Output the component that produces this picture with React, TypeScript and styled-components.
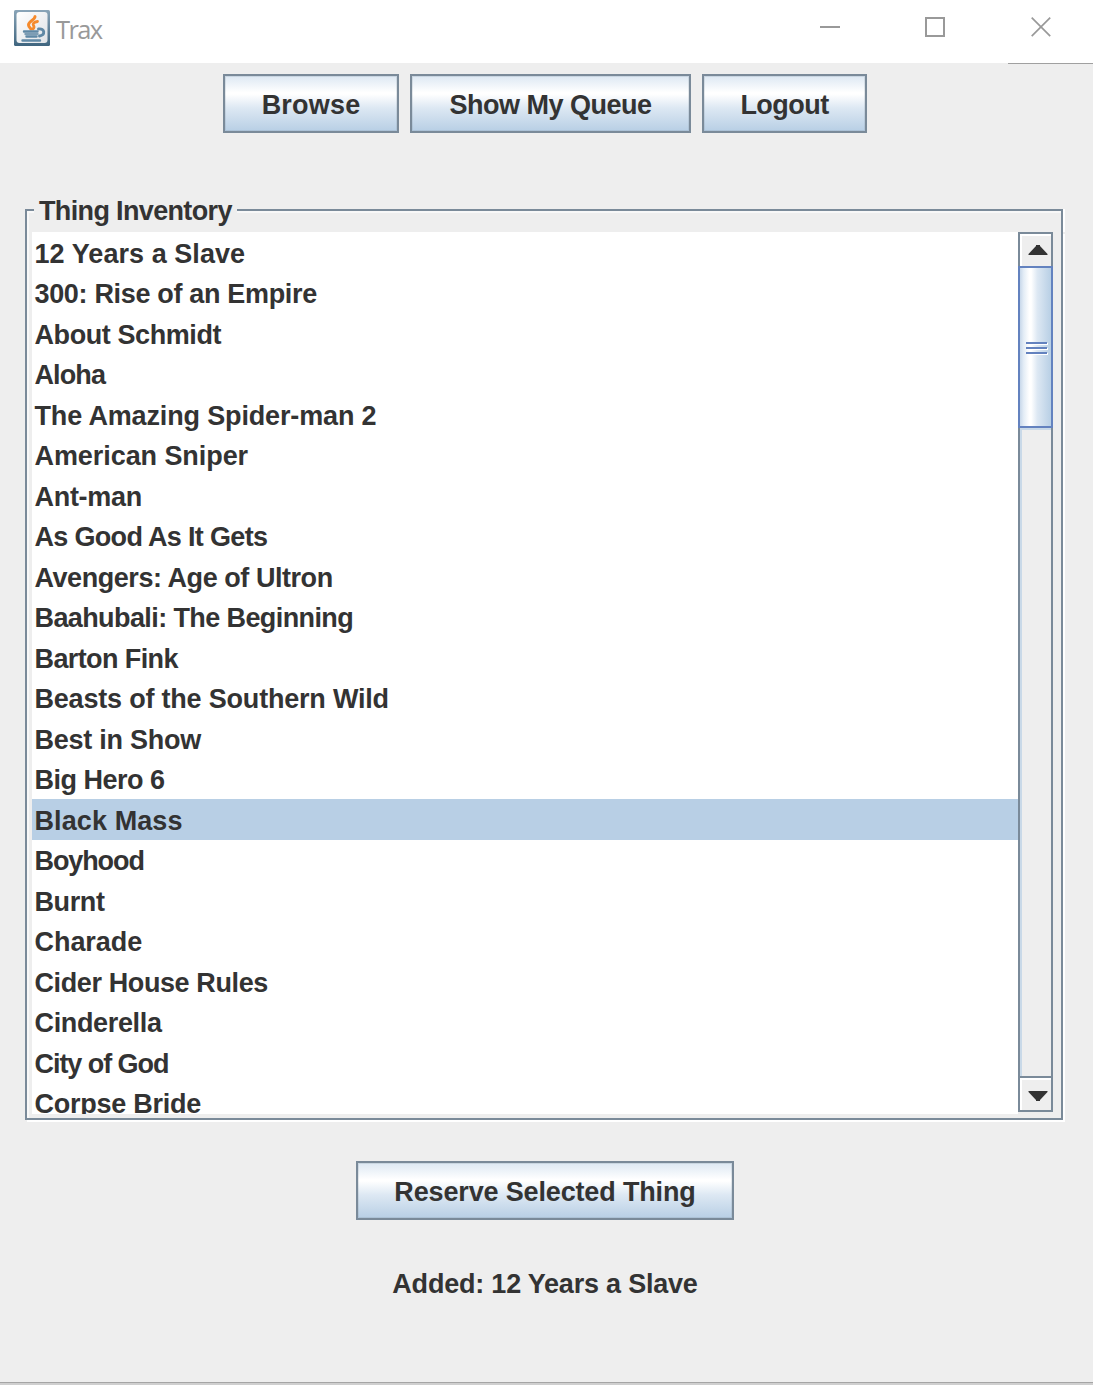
import React, { useState } from "react";
import styled, { createGlobalStyle } from "styled-components";

const steel = "#7a8a99";
const panel = "#eeeeee";
const ink = "#333333";

const GlobalStyle = createGlobalStyle`
  * { box-sizing: border-box; }
  body { margin: 0; background: ${panel}; }
`;

const Window = styled.div`
  display: flex;
  flex-direction: column;
  width: 1093px;
  height: 1385px;
  overflow: hidden;
  background: ${panel};
  border-bottom: 2px solid #cfcfcf;
  color: ${ink};
  font: bold 27px "Liberation Sans", Arial, sans-serif;
  white-space: nowrap;
`;

const TitleBar = styled.header`
  display: flex;
  height: 63px;
  flex: none;
  padding-left: 14px;
  background: #ffffff;
`;

const AppIcon = styled.svg`
  width: 36px;
  height: 36px;
  margin-top: 10px;
`;

const Title = styled.span`
  flex: 1;
  margin: 11px 0 0 6px;
  color: #999999;
  font: 400 25.5px/36px "Open Sans", "Noto Sans", sans-serif;
  letter-spacing: -1.6px;
`;

const WindowControls = styled.div`
  display: flex;
  gap: 85px;
  padding-right: 41px;
`;

const ControlIcon = styled.svg`
  width: 21px;
  height: 21px;
  margin-top: 17px;
  fill: none;
  stroke: #999999;
  stroke-width: 2;
`;

const TitleEdge = styled.div`
  width: 85px;
  height: 1px;
  flex: none;
  align-self: flex-end;
  background: #a0a0a0;
`;

const Content = styled.main`
  display: flex;
  flex: 1;
  flex-direction: column;
  border-bottom: 1px solid #a5a5a5;
`;

const Toolbar = styled.nav`
  display: flex;
  gap: 11px;
  height: 59px;
  margin: 10px 0 0 223px;
`;

const MetalButton = styled.button<{ $width: number; $tracking: number }>`
  width: ${(p) => p.$width}px;
  height: 59px;
  flex: none;
  padding: 4px 0 0;
  border: 2px solid ${steel};
  box-shadow: inset 0 0 0 1px rgba(122, 138, 153, 0.2);
  background: linear-gradient(#dde8f3 0%, #ffffff 30%, #ffffff 33%, #dde8f3 58%, #b8cfe5 100%);
  color: inherit;
  font: inherit;
  letter-spacing: ${(p) => p.$tracking}px;
`;

const Group = styled.section`
  display: flex;
  flex-direction: column;
  width: 1038px;
  margin: 62px 0 0 25px;
`;

const GroupHeader = styled.div`
  display: flex;
  height: 37px;
`;

const CornerLine = styled.div`
  width: 9px;
  margin-top: 14px;
  border-top: 2px solid ${steel};
  border-left: 2px solid ${steel};
  box-shadow: inset 2px 2px 0 #f8f8f8;
`;

const Legend = styled.h2`
  width: 203px;
  margin: 0;
  padding: 1px 0 0 5px;
  font: inherit;
  line-height: 30px;
  letter-spacing: -0.65px;
`;

const TopLine = styled.div`
  flex: 1;
  margin-top: 14px;
  border-top: 2px solid ${steel};
  border-right: 2px solid ${steel};
  box-shadow: inset 0 2px 0 #f8f8f8, 2px 0 0 #ffffff;
`;

const GroupBody = styled.div`
  display: flex;
  height: 888px;
  padding: 0 8px 0 5px;
  border: solid ${steel};
  border-width: 0 2px 2px;
  box-shadow: inset 2px 0 0 #f8f8f8, 2px 2px 0 #ffffff;
`;

const ListView = styled.ul`
  flex: 1;
  height: 882px;
  margin: 0;
  padding: 0;
  overflow: hidden;
  background: #ffffff;
  list-style: none;
`;

const ListRow = styled.li<{ $selected: boolean; $tracking: number }>`
  height: 40.53px;
  padding: 3.5px 0 0 2.5px;
  background: ${(p) => (p.$selected ? "#b8cfe5" : "transparent")};
  line-height: 37px;
  letter-spacing: ${(p) => p.$tracking}px;
  cursor: default;
`;

const ScrollBar = styled.div`
  display: flex;
  flex-direction: column;
  width: 35px;
  height: 880px;
  border: 2px solid ${steel};
  background: ${panel};
`;

const ScrollArrow = styled.button<{ $down?: boolean }>`
  display: flex;
  align-items: center;
  justify-content: center;
  height: ${(p) => (p.$down ? 34 : 32)}px;
  flex: none;
  margin: 0;
  padding: ${(p) => (p.$down ? "3px 0 0 5px" : "0 0 1px 5px")};
  border: 0 solid ${steel};
  border-top-width: ${(p) => (p.$down ? 2 : 0)}px;
  box-shadow: inset 2px 2px 0 #ffffff;
  background: ${panel};
`;

const ArrowGlyph = styled.svg`
  width: 20px;
  height: 10px;
  fill: ${ink};
`;

const Thumb = styled.div`
  display: flex;
  flex-direction: column;
  align-items: center;
  justify-content: center;
  gap: 3px;
  height: 162px;
  flex: none;
  margin: 0 -2px;
  padding-top: 1px;
  border: 2px solid #6382bf;
  background: linear-gradient(90deg, #c8d8ea 0, #e4edf6 12%, #ffffff 30%, #ffffff 36%, #dde8f3 56%, #b8cfe5 100%);
`;

const Grip = styled.div`
  width: 21px;
  height: 2px;
  margin-left: 1px;
  background: #6382bf;
  box-shadow: 1px 1px 0 #ffffff;
`;

const Track = styled.div`
  flex: 1;
  box-shadow: inset 2px 2px 0 #c9d9e8;
`;

const Footer = styled.footer`
  display: flex;
  flex-direction: column;
  align-items: center;
  gap: 48px;
  width: 1090px;
  padding-top: 41px;
`;

const Status = styled.p`
  margin: 0;
  line-height: 32px;
  letter-spacing: -0.21px;
`;

const movies: { title: string; tracking: number }[] = [
  { title: "12 Years a Slave", tracking: 0.06 },
  { title: "300: Rise of an Empire", tracking: -0.33 },
  { title: "About Schmidt", tracking: -0.42 },
  { title: "Aloha", tracking: -0.9 },
  { title: "The Amazing Spider-man 2", tracking: -0.15 },
  { title: "American Sniper", tracking: -0.07 },
  { title: "Ant-man", tracking: -0.3 },
  { title: "As Good As It Gets", tracking: -0.68 },
  { title: "Avengers: Age of Ultron", tracking: -0.45 },
  { title: "Baahubali: The Beginning", tracking: -0.6 },
  { title: "Barton Fink", tracking: -0.6 },
  { title: "Beasts of the Southern Wild", tracking: -0.2 },
  { title: "Best in Show", tracking: -0.25 },
  { title: "Big Hero 6", tracking: -0.5 },
  { title: "Black Mass", tracking: 0.1 },
  { title: "Boyhood", tracking: -1.1 },
  { title: "Burnt", tracking: -0.4 },
  { title: "Charade", tracking: -0.05 },
  { title: "Cider House Rules", tracking: -0.39 },
  { title: "Cinderella", tracking: -0.35 },
  { title: "City of God", tracking: -1.05 },
  { title: "Corpse Bride", tracking: -0.25 },
];

function JavaIcon() {
  return (
    <AppIcon viewBox="0 0 36 36">
      <defs>
        <linearGradient id="frame" x1="0" y1="0" x2="0" y2="1">
          <stop offset="0" stopColor="#8aa5b8" />
          <stop offset="1" stopColor="#3f657f" />
        </linearGradient>
        <linearGradient id="face" x1="0" y1="0" x2="1" y2="1">
          <stop offset="0" stopColor="#ffffff" />
          <stop offset="1" stopColor="#dfe3e7" />
        </linearGradient>
      </defs>
      <rect width="36" height="36" rx="1.5" fill="url(#frame)" />
      <rect x="2.5" y="2" width="31" height="31" rx="3" fill="url(#face)" />
      <g fill="none" strokeLinecap="round">
        <path d="M21 6.500c0 3.500-6.500 4.500-6.500 8.500 0 1.800 1.500 3 2.500 4" stroke="#f58a2c" strokeWidth="3" />
        <path d="M23.500 11.500c-4 .5-5 2.500-4 4 .8 1.200.5 2.500-.5 3.500" stroke="#f58a2c" strokeWidth="2.800" />
        <path d="M10 21.500h13.500M12.500 26.500h10M8.500 30.500h17.500" stroke="#5f88a5" strokeWidth="2.400" />
        <path d="M11.500 24h12" stroke="#7d9db4" strokeWidth="2.400" />
        <path d="M24.500 19c6.500-1 7 6 1 7" stroke="#5f88a5" strokeWidth="2.900" />
      </g>
    </AppIcon>
  );
}

export default function App() {
  const [selected, setSelected] = useState("Black Mass");
  return (
    <Window>
      <GlobalStyle />
      <TitleBar>
        <JavaIcon />
        <Title>Trax</Title>
        <WindowControls>
          <ControlIcon viewBox="0 0 21 21">
            <path d="M1 10H21" />
          </ControlIcon>
          <ControlIcon viewBox="0 0 21 21">
            <rect x="1" y="1" width="18" height="18" />
          </ControlIcon>
          <ControlIcon viewBox="0 0 21 21">
            <path d="M0.700 0.700L19.200 19.200M19.200 0.700L0.700 19.200" strokeWidth="1.700" />
          </ControlIcon>
        </WindowControls>
      </TitleBar>
      <TitleEdge />
      <Content>
        <Toolbar>
          <MetalButton $width={176} $tracking={0.2}>Browse</MetalButton>
          <MetalButton $width={281} $tracking={-0.5}>Show My Queue</MetalButton>
          <MetalButton $width={165} $tracking={-0.55}>Logout</MetalButton>
        </Toolbar>
        <Group>
          <GroupHeader>
            <CornerLine />
            <Legend>Thing Inventory</Legend>
            <TopLine />
          </GroupHeader>
          <GroupBody>
            <ListView>
              {movies.map((m) => (
                <ListRow
                  key={m.title}
                  $selected={m.title === selected}
                  $tracking={m.tracking}
                  onClick={() => setSelected(m.title)}
                >
                  {m.title}
                </ListRow>
              ))}
            </ListView>
            <ScrollBar>
              <ScrollArrow aria-label="Scroll up">
                <ArrowGlyph viewBox="0 0 20 10">
                  <path d="M0.500 10V9L8 1V0H12V1L19.500 9V10Z" />
                </ArrowGlyph>
              </ScrollArrow>
              <Thumb>
                <Grip />
                <Grip />
                <Grip />
              </Thumb>
              <Track />
              <ScrollArrow $down aria-label="Scroll down">
                <ArrowGlyph viewBox="0 0 20 10">
                  <path d="M0.500 0H19.500V1L12 9V10H8V9L0.500 1Z" />
                </ArrowGlyph>
              </ScrollArrow>
            </ScrollBar>
          </GroupBody>
        </Group>
        <Footer>
          <MetalButton $width={378} $tracking={-0.15}>Reserve Selected Thing</MetalButton>
          <Status>Added: 12 Years a Slave</Status>
        </Footer>
      </Content>
    </Window>
  );
}
